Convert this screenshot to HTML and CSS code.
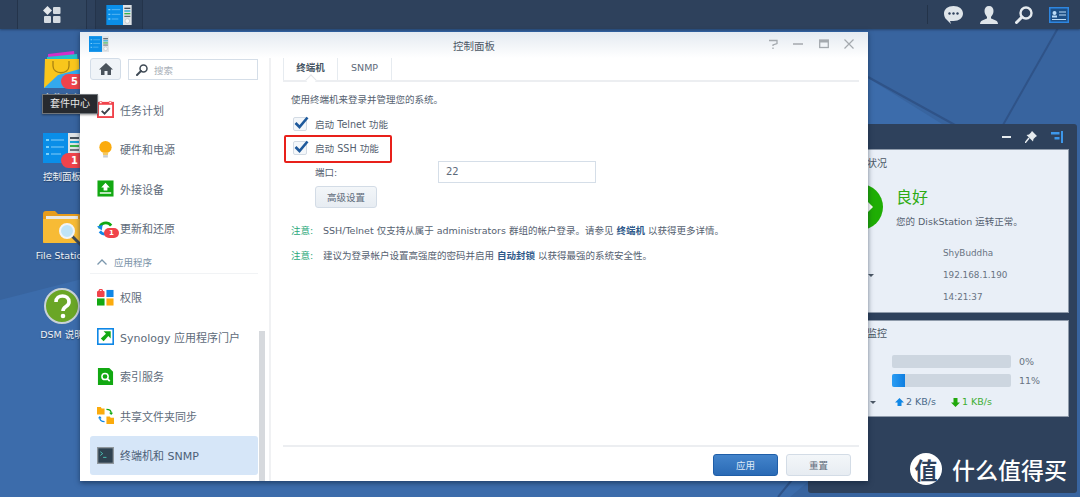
FILE: index.html
```html
<!DOCTYPE html>
<html lang="zh-CN">
<head>
<meta charset="utf-8">
<title>控制面板</title>
<link rel="stylesheet" href="styles.css">
</head>
<body>
<svg class="defs" width="0" height="0" aria-hidden="true">
  <symbol id="cp" viewBox="0 0 38 30">
    <rect width="25" height="30" fill="#0a8ee8"/>
    <rect x="25" width="13" height="30" fill="#dfe3e6"/>
    <path d="M3 7h3M3 14h3M3 21h3" stroke="#7cd0fa" stroke-width="2"/>
    <path d="M8 7h13M8 14h13M8 21h10" stroke="#5bb8f2" stroke-width="1.4"/>
    <path d="M27 5h9" stroke="#47505a" stroke-width="2"/>
    <path d="M27 9h9" stroke="#1aa6d8" stroke-width="2"/>
    <path d="M27 13h9" stroke="#38b24a" stroke-width="2"/>
    <path d="M27 17h9" stroke="#47505a" stroke-width="1.5"/>
    <circle cx="31.5" cy="24" r="3.5" fill="#f5f7f8" stroke="#b8c0c6"/>
  </symbol>
</svg>
<div class="desktop">
  <svg class="wallpaper" viewBox="0 0 1080 497" preserveAspectRatio="none" aria-hidden="true">
    <path d="M0 0H1080V497H0Z" fill="#38649f"/>
    <path d="M868 78L1000 160V320L790 497H0V300Z" fill="#3c6cab"/>
    <path d="M868 77L955 125" stroke="#2f5388" stroke-width="2" fill="none"/>
    <path d="M1058 28L1003 125" stroke="#2f5388" stroke-width="2" fill="none"/>
    <path d="M800 470L778 497" stroke="#2f5388" stroke-width="2" fill="none"/>
  </svg>

  <header class="taskbar">
    <div class="task-btn task-main">
      <svg width="18" height="18" viewBox="0 0 18 18"><path d="M4.5 0L9 4.5 4.5 9 0 4.5Z" fill="#e4e8ec"/><rect x="10" y="1" width="7.5" height="7" rx="1" fill="#d6dce2"/><rect x="1" y="10" width="7" height="7" rx="1" fill="#d6dce2"/><rect x="10" y="10" width="7.5" height="7" rx="1" fill="#d6dce2"/></svg>
    </div>
    <div class="task-btn task-app"><svg class="cp-task"><use href="#cp"/></svg></div>
    <div class="tray">
      <svg width="19" height="18" viewBox="0 0 19 18"><path d="M9.5 0C15 0 19 3 19 7.5S15 15 9.5 15L6 15 7 18 2.5 13.5C1 12.5 0 10 0 7.5 0 3 4 0 9.5 0Z" fill="#dfe5ea"/><circle cx="5.5" cy="7.5" r="1.2" fill="#2e415c"/><circle cx="9.5" cy="7.5" r="1.2" fill="#2e415c"/><circle cx="13.5" cy="7.5" r="1.2" fill="#2e415c"/></svg>
      <svg width="18" height="18" viewBox="0 0 18 18"><path d="M9 0C12 0 13.5 2 13.5 5S12 9.5 11 11V12.5C13 13.5 18 14 18 18H0C0 14 5 13.5 7 12.5V11C6 9.5 4.5 8 4.5 5S6 0 9 0Z" fill="#dfe5ea"/></svg>
      <svg width="18" height="18" viewBox="0 0 18 18"><circle cx="11" cy="7" r="5.5" fill="none" stroke="#e6ebef" stroke-width="2.4"/><path d="M7 11L1.5 16.5" stroke="#e6ebef" stroke-width="3" stroke-linecap="round"/></svg>
      <svg class="tray-card" width="20" height="16" viewBox="0 0 20 16"><rect width="20" height="16" fill="#2e86e0"/><rect x="1.5" y="1.5" width="17" height="13" fill="#1d4f86"/><circle cx="5.5" cy="6" r="2" fill="#bcdcf8"/><rect x="3" y="8.5" width="5" height="2" fill="#bcdcf8"/><path d="M10 5h7M10 8h7M3 12.5h14" stroke="#bcdcf8" stroke-width="1.2"/></svg>
    </div>
  </header>

  <nav class="shortcuts">
    <div class="shortcut">
      <div class="sc-icon">
        <svg width="36" height="37" viewBox="0 0 36 37"><path d="M4 3L30 0 31 10H4Z" fill="#d32ec9"/><path d="M3 6L33 3 34 12H3Z" fill="#22c4c9"/><path d="M1 8H35L36 37H0Z" fill="#f9c61c"/><path d="M0 37L14 24 36 18V37Z" fill="#33a9ee"/><path d="M9 10V15C9 24 25 24 25 15V10" fill="none" stroke="#a98212" stroke-width="1.3"/></svg>
        <span class="badge">5</span>
      </div>
      <span class="sc-label">套件中心</span>
    </div>
    <div class="shortcut">
      <div class="sc-icon">
        <svg class="cp-desk"><use href="#cp"/></svg>
        <span class="badge">1</span>
      </div>
      <span class="sc-label">控制面板</span>
    </div>
    <div class="shortcut">
      <div class="sc-icon">
        <svg width="38" height="38" viewBox="0 0 38 38"><path d="M0 6C0 4 1 3 3 3H12L15 6H35C37 6 38 7 38 9V35H0Z" fill="#e69c1c"/><rect x="3" y="8" width="32" height="6" fill="#e8e8e4"/><path d="M0 11H38V33C38 34 37 35 36 35H2C1 35 0 34 0 33Z" fill="#f7bb35"/><path d="M29 28L38 37" stroke="#3f4a55" stroke-width="3"/><circle cx="24" cy="23" r="7" fill="#bfe4f7" stroke="#f1f4f6" stroke-width="2"/></svg>
      </div>
      <span class="sc-label">File Station</span>
    </div>
    <div class="shortcut">
      <div class="sc-icon">
        <svg width="36" height="36" viewBox="0 0 36 36"><circle cx="18" cy="18" r="17" fill="#6aa626" stroke="#c9d2d8" stroke-width="2"/><path d="M12 14C12 6 25 6 25 14C25 19 19 18 19 23" fill="none" stroke="#fff" stroke-width="3.6"/><circle cx="19" cy="28" r="2.3" fill="#fff"/></svg>
      </div>
      <span class="sc-label">DSM 说明</span>
    </div>
  </nav>

  <aside class="widgets">
    <div class="widget-head">
      <span class="wh-min"></span>
      <svg width="12" height="12" viewBox="0 0 12 12"><path d="M7 0L12 5 10.5 6 8.5 8 8 10.5 1.5 4 4 3.5 6 1.5Z" fill="#e6ebef"/><path d="M4 7L0 12" stroke="#e6ebef" stroke-width="1.5"/></svg>
      <svg width="12" height="12" viewBox="0 0 12 12"><rect x="10" width="2" height="12" fill="#3d97ea"/><rect y="1" width="8.5" height="2.5" fill="#3d97ea"/><rect x="3.5" y="6" width="5" height="2.5" fill="#3d97ea"/></svg>
    </div>
    <section class="card card-health">
      <h3 class="card-title">系统状况</h3>
      <div class="health">
        <div class="health-dot"><svg class="health-mark" width="5" height="10" viewBox="0 0 5 10"><path d="M0 0L5 5 0 10Z" fill="#fff"/></svg></div>
        <div class="health-text">
          <div class="health-good">良好</div>
          <div class="health-msg">您的 DiskStation 运转正常。</div>
        </div>
      </div>
      <dl class="info">
        <dt>服务器名称</dt><dd>ShyBuddha</dd>
        <dt>IP 地址<i class="caret"></i></dt><dd>192.168.1.190</dd>
        <dt>系统时间</dt><dd>14:21:37</dd>
      </dl>
    </section>
    <section class="card card-monitor">
      <h3 class="card-title">资源监控</h3>
      <div class="meter-row"><span class="meter"></span><span class="pct">0%</span></div>
      <div class="meter-row"><span class="meter"><span class="meter-fill"></span></span><span class="pct">11%</span></div>
      <div class="rates">
        <i class="caret"></i>
        <svg width="9" height="9" viewBox="0 0 9 9"><path d="M4.5 0L9 4.5H6.5V8H2.5V4.5H0Z" fill="#0f87e6"/></svg><span class="rate-up">2 KB/s</span>
        <svg class="rate-gap" width="9" height="9" viewBox="0 0 9 9"><path d="M4.5 9L9 4.5H6.5V0H2.5V4.5H0Z" fill="#20a80c"/></svg><span class="rate-down">1 KB/s</span>
      </div>
    </section>
  </aside>

  <div class="watermark">
    <span class="wm-seal">值</span>
    <span class="wm-text">什么值得买</span>
  </div>

  <main class="window">
    <div class="win-title">
      <svg class="cp-win"><use href="#cp"/></svg>
      <span class="win-name">控制面板</span>
      <div class="win-ctl">
        <svg width="10" height="10" viewBox="0 0 10 10"><path d="M1 1.5H9V4.5L5 6V7M5 8.5V10" fill="none" stroke="#a4a9ae" stroke-width="1.3"/></svg>
        <svg width="10" height="10" viewBox="0 0 10 10"><path d="M0 5H10" stroke="#a4a9ae" stroke-width="1.5"/></svg>
        <svg width="10" height="10" viewBox="0 0 10 10"><rect x=".7" y="1" width="8.6" height="7.5" fill="none" stroke="#a4a9ae" stroke-width="1.3"/><rect x="1" y="1" width="8" height="2.5" fill="#a4a9ae"/></svg>
        <svg width="10" height="10" viewBox="0 0 10 10"><path d="M.5 .5L9.5 9.5M9.5 .5L.5 9.5" stroke="#a4a9ae" stroke-width="1.2"/></svg>
      </div>
    </div>
    <div class="win-body">
      <div class="sidebar">
        <div class="side-tools">
          <div class="home-btn"><svg width="14" height="12" viewBox="0 0 14 12"><path d="M7 0L14 6.5H12V12H8.5V8H5.5V12H2V6.5H0Z" fill="#4a535c"/></svg></div>
          <div class="search-box">
            <svg width="12" height="12" viewBox="0 0 12 12"><circle cx="7.5" cy="4.5" r="3.5" fill="none" stroke="#3f4a55" stroke-width="1.5"/><path d="M5 7L1 11" stroke="#3f4a55" stroke-width="2" stroke-linecap="round"/></svg>
            <span class="search-hint">搜索</span>
          </div>
        </div>
        <ul class="side-list">
          <li class="side-item">
            <svg class="ico" viewBox="0 0 18 18"><rect x="1" y="2" width="16" height="15" fill="#fff" stroke="#f0434b" stroke-width="2"/><rect y="1" width="18" height="3" fill="#f0434b"/><circle cx="4" cy="1.500" r="1.300" fill="#fff" stroke="#f0434b" stroke-width=".8"/><circle cx="14" cy="1.500" r="1.300" fill="#fff" stroke="#f0434b" stroke-width=".8"/><path d="M5 10.500L8 13.500 13.500 7.500" fill="none" stroke="#3c444c" stroke-width="2"/></svg>
            <span>任务计划</span>
          </li>
          <li class="side-item">
            <svg class="ico" viewBox="0 0 18 18"><circle cx="9" cy="6.5" r="6.5" fill="#fbab0d"/><path d="M6 12H12L11.5 15H6.5Z" fill="#f5c862"/><rect x="6.5" y="15" width="5" height="2.5" fill="#c9cdd0"/></svg>
            <span>硬件和电源</span>
          </li>
          <li class="side-item">
            <svg class="ico" viewBox="0 0 18 18"><rect x=".5" y=".5" width="17" height="17" fill="#12a812"/><path d="M9 3L13.5 8H11V11H7V8H4.5Z" fill="#fff"/><rect x="3" y="13" width="12" height="1.5" fill="#fff"/></svg>
            <span>外接设备</span>
          </li>
          <li class="side-item">
            <span class="ico-wrap">
              <svg class="ico" viewBox="0 0 18 18"><path d="M3 9C3 3 11 1 15 6" fill="none" stroke="#12a812" stroke-width="3"/><path d="M15 9C15 15 7 17 3 12" fill="none" stroke="#1288e8" stroke-width="3"/><path d="M0 7L6 5 5 11Z" fill="#1288e8"/></svg>
              <span class="mini-badge">1</span>
            </span>
            <span>更新和还原</span>
          </li>
          <li class="side-section">
            <svg width="10" height="6" viewBox="0 0 10 6"><path d="M.5 5.5L5 1 9.5 5.5" fill="none" stroke="#7b97ad" stroke-width="1.3"/></svg>
            <span>应用程序</span>
          </li>
          <li class="side-item">
            <svg class="ico" viewBox="0 0 18 18"><rect y="2" width="8" height="6.5" rx="1" fill="#f0434b"/><path d="M2 3C2 -.5 6 -.5 6 3" fill="none" stroke="#f0434b" stroke-width="1.3"/><rect x="10" y="1" width="7.5" height="7.5" fill="#0f87e6"/><rect y="10" width="8" height="7.5" fill="#12a812"/><rect x="10" y="10" width="7.5" height="7.5" fill="#fbab0d"/></svg>
            <span>权限</span>
          </li>
          <li class="side-item">
            <svg class="ico" viewBox="0 0 18 18"><rect x=".8" y=".8" width="16.4" height="16.4" fill="#fff" stroke="#0f87e6" stroke-width="1.8"/><path d="M7 3.5H14.5V11L12 8.5 7 14 4 11 9.5 6Z" fill="#12a812"/></svg>
            <span>Synology 应用程序门户</span>
          </li>
          <li class="side-item">
            <svg class="ico" viewBox="0 0 18 18"><path d="M1 0H13L17 4V18H1Z" fill="#12a812"/><circle cx="8.5" cy="9" r="3.3" fill="none" stroke="#fff" stroke-width="1.6"/><path d="M11 11.5L13.5 14" stroke="#fff" stroke-width="1.8"/></svg>
            <span>索引服务</span>
          </li>
          <li class="side-item">
            <svg class="ico" viewBox="0 0 18 18"><path d="M0 0H4L5 1.5H8V8H0Z" fill="#fbab0d"/><path d="M10 10H13.5L14.5 11.5H18V18H10Z" fill="#fbab0d"/><path d="M10 2.5C13 2.5 15 3.5 15 6.5" fill="none" stroke="#12a812" stroke-width="1.4"/><path d="M12.8 6L17 6 15 8.5Z" fill="#12a812"/><path d="M8 15.5C5 15.5 3 14.5 3 11.5" fill="none" stroke="#0f87e6" stroke-width="1.4"/><path d="M1 12L5 12 3 9.5Z" fill="#0f87e6"/></svg>
            <span>共享文件夹同步</span>
          </li>
          <li class="side-item is-active">
            <svg class="ico" viewBox="0 0 18 18"><rect x=".7" y=".7" width="16.6" height="16.6" fill="#2f4250" stroke="#8f979d" stroke-width="1.4"/><path d="M3.5 5L6 7 3.5 9M6.5 11H10" fill="none" stroke="#4fd0c0" stroke-width=".9"/></svg>
            <span>终端机和 SNMP</span>
          </li>
        </ul>
        <div class="side-scroll"></div>
      </div>
      <div class="content">
        <div class="tabs">
          <span class="tab is-current">终端机</span>
          <span class="tab">SNMP</span>
        </div>
        <div class="pane">
          <p class="intro">使用终端机来登录并管理您的系统。</p>
          <div class="check-row">
            <span class="check"><svg width="15" height="13" viewBox="0 0 15 13"><path d="M1.5 7L5.5 11 13.5 1.5" fill="none" stroke="#1f5a9c" stroke-width="2.6"/></svg></span>
            <span>启动 Telnet 功能</span>
          </div>
          <div class="check-row check-ssh">
            <span class="check"><svg width="15" height="13" viewBox="0 0 15 13"><path d="M1.5 7L5.5 11 13.5 1.5" fill="none" stroke="#1f5a9c" stroke-width="2.6"/></svg></span>
            <span>启动 SSH 功能</span>
            <span class="highlight"></span>
          </div>
          <div class="port-row">
            <label class="port-label">端口:</label>
            <span class="port-input">22</span>
          </div>
          <button class="btn btn-adv">高级设置</button>
          <p class="note"><span class="note-tag">注意:</span><span>SSH/Telnet 仅支持从属于 administrators 群组的帐户登录。请参见 <b>终端机</b> 以获得更多详情。</span></p>
          <p class="note"><span class="note-tag">注意:</span><span>建议为登录帐户设置高强度的密码并启用 <b>自动封锁</b> 以获得最强的系统安全性。</span></p>
        </div>
        <div class="foot">
          <button class="btn btn-primary">应用</button>
          <button class="btn btn-reset">重置</button>
        </div>
      </div>
    </div>
  </main>

  <div class="tooltip">套件中心</div>
</div>
</body>
</html>
```
FILE: styles.css
```css
* { box-sizing: border-box; }
html, body { margin: 0; padding: 0; }
body { width: 1080px; height: 497px; overflow: hidden; font-family: "DejaVu Sans", "Noto Sans CJK SC", sans-serif; }
.defs { position: absolute; }
.desktop { position: relative; width: 1080px; height: 497px; overflow: hidden; }
.wallpaper { position: absolute; left: 0; top: 0; width: 1080px; height: 497px; }

.taskbar { position: relative; height: 29px; display: flex; align-items: stretch; padding-left: 17px; background: #2e415c; box-shadow: 0 1px 2px rgba(20,40,70,.5); }
.task-btn { display: flex; align-items: center; justify-content: center; border-left: 1px solid #24344b; border-right: 1px solid #24344b; background: #31455f; }
.task-main { width: 70px; }
.task-app { width: 48px; margin-left: 8px; background: #2a3c55; }
.cp-task { width: 26px; height: 20px; }
.tray { margin-left: auto; display: flex; align-items: center; gap: 17px; padding: 0 11px 0 17px; position: relative; }
.tray::before { content: ""; position: absolute; left: 0; top: 5px; bottom: 5px; width: 1px; background: #233349; }
.tray-card { margin-left: -1px; }

.shortcuts { position: absolute; left: 22px; top: 50px; width: 80px; display: flex; flex-direction: column; }
.shortcut { height: 79px; display: flex; flex-direction: column; align-items: center; }
.sc-icon { position: relative; width: 38px; height: 38px; display: flex; align-items: center; justify-content: center; }
.cp-desk { width: 38px; height: 30px; }
.badge { position: absolute; left: 18px; top: 24px; width: 27px; height: 15px; border-radius: 8px; background: #f0434b; color: #fff; font-size: 10px; line-height: 15px; text-align: center; font-weight: 700; }
.sc-label { margin-top: 3px; height: 14px; line-height: 14px; font-size: 9.5px; color: #eef2f6; white-space: nowrap; text-shadow: 0 1px 1px rgba(0,0,0,.4); }

.tooltip { position: absolute; left: 42px; top: 94px; width: 56px; height: 20px; border: 1px solid #70757a; background: #272a2f; color: #e8e8e8; font-size: 10px; line-height: 18px; text-align: center; box-shadow: 0 1px 2px rgba(0,0,0,.4); }

.widgets { position: absolute; left: 808px; top: 124px; width: 269px; height: 369px; padding: 0 8px; background: #2e415c; border-radius: 3px; }
.widget-head { height: 25px; display: flex; align-items: center; justify-content: flex-end; gap: 14px; padding-right: 6px; }
.wh-min { width: 9px; height: 2px; background: #e6ebef; }
.card { position: relative; background: #e9eff7; border: 1px solid #8f9bab; color: #5a6675; margin-bottom: 7px; }
.card-health { height: 164px; }
.card-monitor { height: 97px; }
.card-title { margin: 0; position: absolute; left: 30px; top: 7px; font-size: 10px; line-height: 14px; font-weight: 400; color: #4c5866; white-space: nowrap; }
.card-monitor .card-title { top: 6px; }
.health { position: absolute; left: 20px; top: 34px; display: flex; gap: 13px; }
.health-dot { position: relative; width: 46px; height: 46px; border-radius: 50%; background: #1fae04; flex: none; }
.health-mark { position: absolute; left: 31px; top: 18px; }
.health-text { padding-top: 3px; }
.health-good { font-size: 16px; line-height: 22px; color: #2dab12; }
.health-msg { font-size: 9.5px; line-height: 14px; margin-top: 6px; color: #556170; white-space: nowrap; }
.info { position: absolute; left: 3px; top: 92px; margin: 0; display: grid; grid-template-columns: 123px auto; grid-auto-rows: 22px; align-items: center; font-size: 8.8px; }
.info dt { color: #5a6675; white-space: nowrap; display: flex; align-items: center; justify-content: space-between; padding-right: 69px; }
.info dd { margin: 0; color: #687382; white-space: nowrap; }
.caret { display: inline-block; width: 0; height: 0; border: 3px solid transparent; border-top: 3px solid #4c5866; border-bottom: 0; }
.meter-row { position: absolute; left: 75px; top: 34px; display: flex; align-items: center; gap: 8px; }
.meter-row + .meter-row { top: 53px; }
.meter { display: block; width: 119px; height: 13px; border-radius: 2px; background: #cdd6e0; overflow: hidden; }
.meter-fill { display: block; width: 13px; height: 13px; background: linear-gradient(90deg, #2a9df4, #0f7ee0); }
.pct { font-size: 9.5px; color: #687382; }
.rates { position: absolute; left: 53px; top: 74px; display: flex; align-items: center; font-size: 9.5px; line-height: 14px; white-space: nowrap; }
.rates svg { margin-left: 19px; margin-right: 2px; }
.rates .rate-gap { margin-left: 15px; margin-right: 2px; }
.rate-up { color: #4a6a8a; }
.rate-down { color: #3fae33; }

.watermark { position: absolute; left: 910px; top: 453px; display: flex; align-items: center; gap: 10px; color: #fff; }
.wm-seal { width: 32px; height: 32px; border-radius: 50%; background: #fff; color: #2e415c; font-size: 23px; line-height: 32px; text-align: center; font-family: "Noto Sans CJK SC", sans-serif; font-weight: 700; }
.wm-text { font-size: 23px; line-height: 32px; font-family: "Noto Sans CJK SC", sans-serif; font-weight: 500; white-space: nowrap; }

.window { position: absolute; left: 80px; top: 31px; width: 788px; height: 450px; background: #fff; box-shadow: 0 2px 5px rgba(10,25,50,.55); display: flex; flex-direction: column; border-top: 1px solid #2f5e9c; }
.win-title { position: relative; height: 26px; flex: none; background: linear-gradient(#e4eaf1, #fff); display: flex; align-items: center; justify-content: center; }
.cp-win { position: absolute; left: 9px; top: 4px; width: 20px; height: 16px; }
.win-name { font-size: 10.5px; color: #4c5866; }
.win-ctl { position: absolute; right: 14px; top: 7px; display: flex; gap: 15.5px; }
.win-body { flex: 1; display: flex; min-height: 0; }

.sidebar { position: relative; width: 191px; flex: none; padding-left: 10px; border-right: 2px solid #f0f1f3; overflow: hidden; }
.side-tools { display: flex; gap: 7px; height: 22px; margin-bottom: 10px; padding-right: 11px; }
.home-btn { width: 31px; height: 22px; border: 1px solid #d3dde8; border-radius: 3px; background: #f0f4f8; display: flex; align-items: center; justify-content: center; }
.search-box { flex: 1; height: 21px; margin-top: 1px; border: 1px solid #d5dee8; display: flex; align-items: center; gap: 6px; padding-left: 7px; }
.search-hint { font-size: 9.5px; color: #a9b0b8; }
.side-list { list-style: none; margin: 0; padding: 0; width: 168px; }
.side-item { height: 39.5px; display: flex; align-items: center; gap: 6px; padding-left: 7px; font-size: 11px; color: #5e6b7a; white-space: nowrap; border-radius: 3px; }
.ico { width: 17px; height: 17px; flex: none; display: block; }
.ico-wrap { position: relative; width: 17px; height: 17px; flex: none; }
.mini-badge { position: absolute; left: 7px; top: 8px; width: 15px; height: 10px; border-radius: 5px; background: #f0434b; color: #fff; font-size: 7px; line-height: 10px; text-align: center; font-weight: 700; }
.side-section { height: 25.5px; margin-bottom: 4px; padding: 3px 0 0 7px; display: flex; align-items: center; gap: 7px; font-size: 9.5px; color: #7b93a8; border-bottom: 1px solid #f1f3f5; }
.is-active { background: #d6e6f8; color: #4d6077; }
.side-scroll { position: absolute; left: 179px; top: 273px; width: 6px; height: 150px; background: #d6d9dd; }

.content { flex: 1; display: flex; flex-direction: column; min-width: 0; padding: 0 9px 0 12px; }
.tabs { height: 24px; flex: none; display: flex; border-bottom: 2px solid #eceef1; position: relative; }
.tab { height: 22px; line-height: 20px; padding: 0 13px; font-size: 9.5px; color: #5e6b7a; border-right: 1px solid #e6ebf0; }
.tab.is-current { position: relative; font-weight: 700; color: #475563; border-left: 1px solid #e6ebf0; width: 55px; padding: 0; text-align: center; }
.tab.is-current::after { content: ""; position: absolute; left: 23px; bottom: -4px; width: 7px; height: 7px; background: #fff; border-left: 1px solid #e4e6ea; border-top: 1px solid #e4e6ea; transform: rotate(45deg); }
.pane { flex: 1; padding: 0 0 0 8px; font-size: 9.5px; color: #556170; }
.intro { margin: 11px 0 0; line-height: 14px; }
.check-row { position: relative; display: flex; align-items: center; gap: 8px; height: 14px; margin-left: 2px; font-size: 9.6px; white-space: nowrap; }
.intro + .check-row { margin-top: 10px; }
.check-ssh { margin-top: 10px; }
.check { position: relative; width: 14px; height: 14px; border: 1px solid #d3dbe4; border-radius: 2px; background: #f4f7fa; display: block; flex: none; }
.check svg { position: absolute; left: 0; top: -2px; }
.highlight { position: absolute; left: -9px; top: -6px; width: 108px; height: 28px; border: 2px solid #e8201a; border-radius: 2px; }
.port-row { margin: 6px 0 0 24px; display: flex; align-items: center; height: 22px; }
.port-label { width: 123px; font-size: 9.5px; }
.port-input { width: 158px; height: 22px; border: 1px solid #d5dee8; padding-left: 7px; line-height: 20px; font-size: 10px; color: #5e6b7a; }
.btn { font-family: inherit; font-size: 9.5px; border-radius: 3px; padding: 0; height: 22px; display: block; }
.btn-adv { margin: 3px 0 0 24px; width: 62px; border: 1px solid #d3dce6; background: linear-gradient(#f3f6f9, #e7ecf2); color: #5e6b7a; }
.note { margin: 0; display: flex; line-height: 14px; white-space: nowrap; }
.btn-adv + .note { margin-top: 16px; }
.note + .note { margin-top: 11px; }
.note-tag { width: 32px; flex: none; color: #2aa87a; }
.note b { color: #2f5a8a; font-weight: 700; }
.foot { height: 36px; flex: none; border-top: 2px solid #eceef1; display: flex; justify-content: flex-end; gap: 8px; padding: 7px 8px 0 0; }
.foot .btn { width: 65px; height: 22px; }
.btn-primary { border: 1px solid #1f5ea8; background: linear-gradient(#4384cb, #2a6ab5); color: #dfeaf6; }
.btn-reset { border: 1px solid #d3dce6; background: linear-gradient(#f3f6f9, #e7ecf2); color: #5e6b7a; }
```
